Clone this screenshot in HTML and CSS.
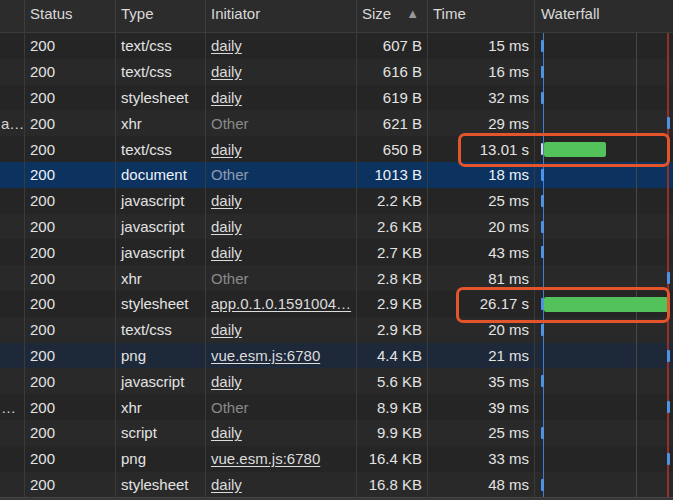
FILE: index.html
```html
<!DOCTYPE html>
<html>
<head>
<meta charset="utf-8">
<link rel="stylesheet" href="styles.css">
</head>
<body>
<div class="panel">
  <div class="row head">
    <div class="c name"></div>
    <div class="c">Status</div>
    <div class="c">Type</div>
    <div class="c">Initiator</div>
    <div class="c size-h"><span>Size</span><span class="sort">▲</span></div>
    <div class="c">Time</div>
    <div class="c wf-h">Waterfall</div>
  </div>

  <div class="row odd"><div class="c name"></div><div class="c">200</div><div class="c">text/css</div><div class="c"><span class="link">daily</span></div><div class="c num">607 B</div><div class="c num">15 ms</div><div class="c wf"><i class="tick" style="left:6px"></i></div></div>
  <div class="row even"><div class="c name"></div><div class="c">200</div><div class="c">text/css</div><div class="c"><span class="link">daily</span></div><div class="c num">616 B</div><div class="c num">16 ms</div><div class="c wf"><i class="tick" style="left:6px"></i></div></div>
  <div class="row odd"><div class="c name"></div><div class="c">200</div><div class="c">stylesheet</div><div class="c"><span class="link">daily</span></div><div class="c num">619 B</div><div class="c num">32 ms</div><div class="c wf"><i class="tick" style="left:6px"></i></div></div>
  <div class="row even"><div class="c name cut">a…</div><div class="c">200</div><div class="c">xhr</div><div class="c"><span class="other">Other</span></div><div class="c num">621 B</div><div class="c num">29 ms</div><div class="c wf"><i class="tick" style="left:132px"></i></div></div>
  <div class="row odd"><div class="c name"></div><div class="c">200</div><div class="c">text/css</div><div class="c"><span class="link">daily</span></div><div class="c num">650 B</div><div class="c num">13.01 s</div><div class="c wf"><i class="tick wt" style="left:6px"></i><i class="bar" style="left:9px;width:62px"></i></div></div>
  <div class="row sel"><div class="c name"></div><div class="c">200</div><div class="c">document</div><div class="c"><span class="other">Other</span></div><div class="c num">1013 B</div><div class="c num">18 ms</div><div class="c wf"><i class="tick" style="left:6px"></i></div></div>
  <div class="row odd"><div class="c name"></div><div class="c">200</div><div class="c">javascript</div><div class="c"><span class="link">daily</span></div><div class="c num">2.2 KB</div><div class="c num">25 ms</div><div class="c wf"><i class="tick" style="left:6px"></i></div></div>
  <div class="row even"><div class="c name"></div><div class="c">200</div><div class="c">javascript</div><div class="c"><span class="link">daily</span></div><div class="c num">2.6 KB</div><div class="c num">20 ms</div><div class="c wf"><i class="tick" style="left:6px"></i></div></div>
  <div class="row odd"><div class="c name"></div><div class="c">200</div><div class="c">javascript</div><div class="c"><span class="link">daily</span></div><div class="c num">2.7 KB</div><div class="c num">43 ms</div><div class="c wf"><i class="tick" style="left:6px"></i></div></div>
  <div class="row even"><div class="c name"></div><div class="c">200</div><div class="c">xhr</div><div class="c"><span class="other">Other</span></div><div class="c num">2.8 KB</div><div class="c num">81 ms</div><div class="c wf"><i class="tick" style="left:132px"></i></div></div>
  <div class="row odd"><div class="c name"></div><div class="c">200</div><div class="c">stylesheet</div><div class="c"><span class="link">app.0.1.0.1591004…</span></div><div class="c num">2.9 KB</div><div class="c num">26.17 s</div><div class="c wf"><i class="tick" style="left:6px"></i><i class="bar" style="left:9px;width:124px"></i></div></div>
  <div class="row even"><div class="c name"></div><div class="c">200</div><div class="c">text/css</div><div class="c"><span class="link">daily</span></div><div class="c num">2.9 KB</div><div class="c num">20 ms</div><div class="c wf"><i class="tick" style="left:6px"></i></div></div>
  <div class="row hov"><div class="c name"></div><div class="c">200</div><div class="c">png</div><div class="c"><span class="link">vue.esm.js:6780</span></div><div class="c num">4.4 KB</div><div class="c num">21 ms</div><div class="c wf"><i class="tick" style="left:132px"></i></div></div>
  <div class="row even"><div class="c name"></div><div class="c">200</div><div class="c">javascript</div><div class="c"><span class="link">daily</span></div><div class="c num">5.6 KB</div><div class="c num">35 ms</div><div class="c wf"><i class="tick" style="left:6px"></i></div></div>
  <div class="row odd"><div class="c name cut">…</div><div class="c">200</div><div class="c">xhr</div><div class="c"><span class="other">Other</span></div><div class="c num">8.9 KB</div><div class="c num">39 ms</div><div class="c wf"><i class="tick" style="left:132px"></i></div></div>
  <div class="row even"><div class="c name"></div><div class="c">200</div><div class="c">script</div><div class="c"><span class="link">daily</span></div><div class="c num">9.9 KB</div><div class="c num">25 ms</div><div class="c wf"><i class="tick" style="left:6px"></i></div></div>
  <div class="row odd"><div class="c name"></div><div class="c">200</div><div class="c">png</div><div class="c"><span class="link">vue.esm.js:6780</span></div><div class="c num">16.4 KB</div><div class="c num">33 ms</div><div class="c wf"><i class="tick" style="left:132px"></i></div></div>
  <div class="row even"><div class="c name"></div><div class="c">200</div><div class="c">stylesheet</div><div class="c"><span class="link">daily</span></div><div class="c num">16.8 KB</div><div class="c num">48 ms</div><div class="c wf"><i class="tick" style="left:6px"></i></div></div>

  <div class="mark mark1"></div>
  <div class="mark mark2"></div>
</div>
<div class="footer"></div>
</body>
</html>
```
FILE: styles.css
```css
html, body {
  margin: 0;
  padding: 0;
  background: #262626;
}
body {
  width: 673px;
  height: 500px;
  overflow: hidden;
  font-family: "Liberation Sans", Arial, sans-serif;
  font-size: 15px;
  color: #e3e3e3;
}
.panel {
  position: relative;
}
.row {
  display: grid;
  grid-template-columns: 24px 91px 90px 151px 71px 107px 139px;
  height: 25.8px;
}
.row.head {
  height: 32px;
  background: #2c2c2c;
  border-bottom: 1px solid #3b3b3b;
  color: #d9d9d9;
}
.row.odd { background: #252525; }
.row.even { background: #292929; }
.row.sel { background: #0c3260; color: #eef2f8; }
.row.hov { background: #1d2839; }
.c {
  display: flex;
  align-items: center;
  padding: 0 5px;
  border-left: 1px solid #3a3a3a;
  white-space: nowrap;
  overflow: hidden;
  min-width: 0;
}
.head .c {
  border-left-color: #3e3e3e;
  padding-bottom: 5px;
}
.c.name {
  border-left: none;
  padding: 0;
  color: #d8d8d8;
}
.c.cut { padding-left: 1px; }
.c.num {
  justify-content: flex-end;
}
.size-h {
  justify-content: space-between;
}
.sort {
  font-size: 13px;
  color: #9a9a9a;
  margin-right: 3px;
}
.link {
  text-decoration: underline;
  text-underline-offset: 2px;
  color: #dcdcdc;
}
.other {
  color: #8a8a8a;
}
.sel .other { color: #8e9bb0; }
.wf {
  position: relative;
  padding: 0;
  background:
    linear-gradient(#3d7ed8, #3d7ed8) 8px 0 / 1px 100% no-repeat,
    linear-gradient(#474747, #474747) 101px 0 / 1px 100% no-repeat,
    linear-gradient(#92302c, #92302c) 132px 0 / 2px 100% no-repeat;
}
.head .wf-h {
  padding-left: 6px;
}
.tick {
  position: absolute;
  top: 7px;
  width: 3px;
  height: 12px;
  background: #4f93e4;
  border-radius: 1px;
}
.tick.wt { background: #d8d8d8; width: 2px; }
.bar {
  position: absolute;
  top: 6px;
  height: 15px;
  background: #53c25a;
  border-radius: 2px;
}
.mark {
  position: absolute;
  border: 3px solid #e4552c;
  border-radius: 7px;
  pointer-events: none;
}
.mark1 {
  left: 458px;
  top: 133px;
  width: 206px;
  height: 28px;
}
.mark2 {
  left: 456px;
  top: 287px;
  width: 208px;
  height: 30px;
}
.footer {
  height: 6px;
  background: #373737;
  border-top: 1px solid #444;
}
```
